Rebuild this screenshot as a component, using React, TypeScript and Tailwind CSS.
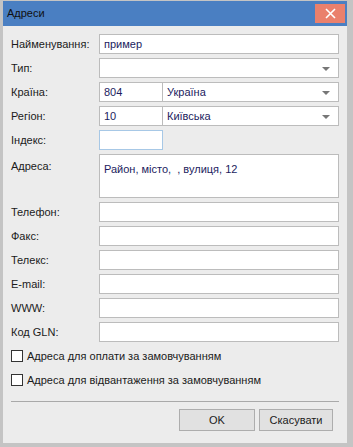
import React from "react";

const font = { fontFamily: '"Liberation Sans", Arial, sans-serif' };

function Arrow() {
  return (
    <svg width="8" height="4" viewBox="0 0 8 4" className="absolute right-[8px] top-[8px]">
      <path d="M0 0 H8 L4 4 Z" fill="#777777" />
    </svg>
  );
}

function Row({ label, children }: { label: string; children?: React.ReactNode }) {
  return (
    <div className="flex h-[20px] items-center">
      <div className="w-[88px] shrink-0 text-[11px] text-[#1b1b1b]">{label}</div>
      {children}
    </div>
  );
}

function Box({ value, className = "", arrow = false }: { value?: string; className?: string; arrow?: boolean }) {
  return (
    <div
      className={
        "relative flex h-[20px] items-center border border-[#bcbcbc] bg-white px-[4px] text-[11px] text-[#1c1c5e] " +
        className
      }
    >
      {value}
      {arrow && <Arrow />}
    </div>
  );
}

function Check({ label }: { label: string }) {
  return (
    <div className="flex h-[20px] items-center gap-[4px]">
      <div className="h-[12px] w-[12px] border border-[#333] bg-white" />
      <span className="text-[11px] text-[#1b1b1b]">{label}</span>
    </div>
  );
}

export default function App() {
  const rows = ["Телефон:", "Факс:", "Телекс:", "E-mail:", "WWW:", "Код GLN:"];
  return (
    <div
      style={font}
      className="flex h-[447px] w-[353px] flex-col border-b-[4px] border-l-[3px] border-r-[6px] border-t-[1px] border-[#c4c4c4] bg-[#ececec]"
    >
      <div className="flex h-[25px] shrink-0 items-center justify-between bg-[#4a7fc2] pl-[4px] pr-[2px]">
        <span className="text-[11px] text-[#101010]">Адреси</span>
        <div className="flex h-[19px] w-[30px] items-center justify-center bg-[#ea806c]">
          <svg width="11" height="11" viewBox="0 0 11 11">
            <path d="M1 1 L10 10 M10 1 L1 10" stroke="white" strokeWidth="1.6" />
          </svg>
        </div>
      </div>
      <div className="flex flex-1 flex-col px-[8px] pt-[8px]">
        <div className="flex flex-col gap-[4px]">
          <Row label="Найменування:">
            <Box value="пример" className="flex-1" />
          </Row>
          <Row label="Тип:">
            <Box className="flex-1" arrow />
          </Row>
          <Row label="Країна:">
            <Box value="804" className="w-[64px]" />
            <Box value="Україна" className="flex-1 border-l-0" arrow />
          </Row>
          <Row label="Регіон:">
            <Box value="10" className="w-[64px]" />
            <Box value="Київська" className="flex-1 border-l-0" arrow />
          </Row>
          <Row label="Індекс:">
            <div className="h-[20px] w-[64px] border border-[#a7c8e6] bg-white" />
          </Row>
          <div className="flex h-[44px]">
            <div className="w-[88px] shrink-0 pt-[4px] text-[11px] text-[#1b1b1b]">Адреса:</div>
            <div className="flex-1 border border-[#bcbcbc] bg-white px-[4px] pt-[6px] text-[11px] text-[#1c1c5e]">
              Район, місто, &nbsp;, вулиця, 12
            </div>
          </div>
          {rows.map((r) => (
            <Row key={r} label={r}>
              <Box className="flex-1" />
            </Row>
          ))}
        </div>
        <div className="mt-[4px] flex flex-col gap-[4px]">
          <Check label="Адреса для оплати за замовчуванням" />
          <Check label="Адреса для відвантаження за замовчуванням" />
        </div>
        <div className="mt-[11px] h-px bg-[#a9a9a9]" />
        <div className="mt-[7px] flex justify-end gap-[4px] pr-[6px]">
          <button className="h-[22px] w-[76px] border border-[#adadad] bg-[#e1e1e1] text-[11px] text-[#1b1b1b]">OK</button>
          <button className="h-[22px] w-[74px] border border-[#adadad] bg-[#e1e1e1] text-[11px] text-[#1b1b1b]">Скасувати</button>
        </div>
      </div>
    </div>
  );
}
